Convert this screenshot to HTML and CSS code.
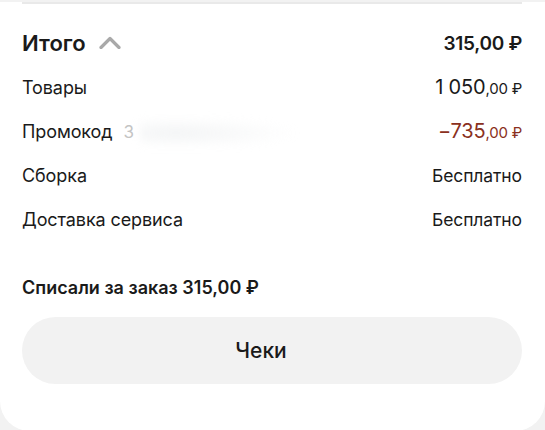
FILE: index.html
```html
<!DOCTYPE html>
<html lang="ru">
<head>
<meta charset="utf-8">
<link rel="stylesheet" href="styles.css">
</head>
<body>
<div class="card">
  <div class="divider"></div>
  <div class="row total">
    <div class="label-group">
      <span class="total-label">Итого</span>
      <svg class="chevron" width="22" height="13" viewBox="0 0 22 13"><path d="M2 11.5 L11 2.5 L20 11.5" fill="none" stroke="#a9a9a9" stroke-width="3.2" stroke-linecap="round" stroke-linejoin="round"/></svg>
    </div>
    <span class="total-value">315,00 ₽</span>
  </div>
  <div class="row">
    <span class="label">Товары</span>
    <span class="value">1 050<span class="cents">,00 ₽</span></span>
  </div>
  <div class="row">
    <span class="label">Промокод <span class="promo-code">З</span><span class="blur-blob"></span></span>
    <span class="value discount">−735<span class="cents">,00 ₽</span></span>
  </div>
  <div class="row">
    <span class="label">Сборка</span>
    <span class="value free">Бесплатно</span>
  </div>
  <div class="row">
    <span class="label">Доставка сервиса</span>
    <span class="value free">Бесплатно</span>
  </div>
  <div class="charged">Списали за заказ 315,00 ₽</div>
  <button class="receipts">Чеки</button>
</div>
</body>
</html>
```

FILE: styles.css
```css
html, body {
  margin: 0;
  padding: 0;
}
body {
  background: #f2f2f2;
  font-family: Inter, "Noto Sans", sans-serif;
  color: #1a1a1a;
}
.card {
  background: #ffffff;
  height: 429px;
  border-radius: 0 0 30px 30px;
  padding: 0 23px 0 22px;
  box-sizing: border-box;
}
.divider {
  height: 2px;
  background: #e9e9e9;
  margin-top: 2px;
}
.row {
  display: flex;
  justify-content: space-between;
  align-items: center;
  height: 44px;
}
.total {
  margin-top: 17px;
}
.label-group {
  display: flex;
  align-items: center;
  gap: 13px;
}
.total-label {
  font-size: 22px;
  font-weight: 600;
  letter-spacing: 0;
}
.chevron {
  display: block;
  margin-top: -2px;
}
.total-value {
  font-size: 19px;
  font-weight: 600;
  letter-spacing: -0.3px;
}
.label {
  font-size: 18px;
  font-weight: 400;
  position: relative;
  letter-spacing: -0.1px;
}
.value {
  font-size: 20px;
  font-weight: 400;
  letter-spacing: -0.2px;
}
.value.free {
  font-size: 17.5px;
  letter-spacing: -0.1px;
}
.cents {
  font-size: 15px;
}
.discount {
  color: #8a3020;
}
.promo-code {
  color: #c4c4c4;
  margin-left: 6px;
  font-size: 17px;
}
.blur-blob {
  position: absolute;
  left: 118px;
  top: -6px;
  width: 180px;
  height: 30px;
  background: radial-gradient(ellipse at 20% 60%, rgba(228,231,233,0.45), rgba(255,255,255,0) 60%);
  filter: blur(4px);
}
.charged {
  margin-top: 36px;
  font-size: 18px;
  font-weight: 600;
  line-height: 22px;
  letter-spacing: 0;
}
.receipts {
  display: block;
  width: 100%;
  margin-top: 18px;
  height: 67px;
  border: none;
  border-radius: 34px;
  background: #f2f2f2;
  padding: 0 22px 0 0;
  font-family: Inter, "Noto Sans", sans-serif;
  font-size: 21px;
  font-weight: 500;
  color: #1a1a1a;
}
```
